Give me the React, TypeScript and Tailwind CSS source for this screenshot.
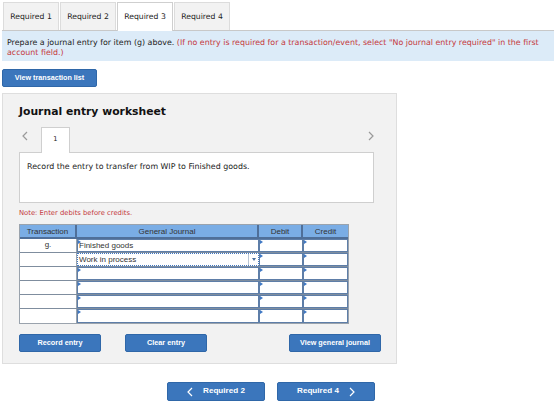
import React from "react";

const TABS = ["Required 1", "Required 2", "Required 3", "Required 4"];
const ACTIVE_TAB = 2;

const ROWS = [
  { txn: "g.", account: "Finished goods" },
  { txn: "", account: "Work in process", focused: true },
  { txn: "", account: "" },
  { txn: "", account: "" },
  { txn: "", account: "" },
  { txn: "", account: "" },
];

function Chevron({ dir, className }: { dir: "left" | "right"; className?: string }) {
  return (
    <svg width="6" height="10" viewBox="0 0 6 10" className={className}>
      <polyline
        points={dir === "left" ? "5,1 1,5 5,9" : "1,1 5,5 1,9"}
        fill="none"
        stroke="currentColor"
        strokeWidth="1.2"
      />
    </svg>
  );
}

// little blue tick that sits in the corner of every input cell
function Marker() {
  return (
    <span className="absolute left-0 top-0 h-0 w-0 border-y-[2px] border-l-[3px] border-y-transparent border-l-[#3f78c4]" />
  );
}

function InputCell({ width, children }: { width: string; children?: React.ReactNode }) {
  return (
    <div className={`${width} relative h-full border border-[#5e7ea8] bg-white`}>
      <Marker />
      {children}
    </div>
  );
}

function BlueButton({ children, className }: { children: React.ReactNode; className?: string }) {
  return (
    <button
      className={`flex items-center justify-center rounded-[2px] border border-[#2f67a8] bg-[#3b76bc] font-['Liberation_Sans',Arial,sans-serif] font-bold text-white ${className ?? ""}`}
    >
      {children}
    </button>
  );
}

export default function App() {
  return (
    <div className="h-[410px] w-[560px] bg-white pl-[2px] pt-[2px] font-['DejaVu_Sans',Verdana,sans-serif] text-[#222]">
      {/* Requirement tabs */}
      <div className="flex h-[28px] gap-[1px] pl-[1px]">
        {TABS.map((tab, i) => (
          <div
            key={tab}
            className={`flex w-[56px] items-center justify-center border border-b-0 text-[7.7px] ${
              i === ACTIVE_TAB
                ? "relative z-10 -mb-[1px] border-[#cfcfcf] bg-white"
                : "border-[#dcdcdc] bg-[#f2f2f2]"
            }`}
          >
            {tab}
          </div>
        ))}
      </div>

      {/* Instruction banner */}
      <div className="mr-[6px] h-[31px] border-t border-[#c8c8c8] bg-[#dcebf8] pl-[5px] pr-[2px] pt-[7px] text-[7.9px] leading-[10px]">
        Prepare a journal entry for item (g) above.{" "}
        <span className="text-[#c4383c]">
          (If no entry is required for a transaction/event, select "No journal entry required" in the first
          account field.)
        </span>
      </div>

      <BlueButton className="mt-[8px] h-[18px] w-[95px] text-[7.2px]">View transaction list</BlueButton>

      {/* Worksheet panel */}
      <div className="mt-[6px] h-[271px] w-[395px] border border-[#dedede] bg-[#f2f2f2] pl-[16px] pt-[12px]">
        <div className="text-[10.8px] font-bold leading-[12px] text-[#111]">Journal entry worksheet</div>

        <div className="mt-[9px] flex h-[25px] w-[355px] items-end">
          <Chevron dir="left" className="mb-[11px] ml-[3px] text-[#9a9a9a]" />
          <div className="relative z-10 -mb-[1px] ml-[13px] flex h-[26px] w-[29px] items-start justify-center border border-b-0 border-[#cfcfcf] bg-white pt-[6px] text-[6.7px]">
            1
          </div>
          <Chevron dir="right" className="mb-[11px] ml-auto text-[#9a9a9a]" />
        </div>

        <div className="h-[51px] w-[355px] border border-[#cfcfcf] bg-white pl-[7px] pt-[8px] text-[7.9px]">
          Record the entry to transfer from WIP to Finished goods.
        </div>

        <div className="mt-[6px] text-[6.8px] leading-[9px] text-[#c4383c]">Note: Enter debits before credits.</div>

        {/* Journal table */}
        <div className="mt-[6px] w-[330px] border border-[#9aa3ad] font-['Liberation_Sans',Arial,sans-serif] text-[8px] text-[#333]">
          <div className="flex h-[14px] border-b-2 border-[#4f6f99] bg-[#7aade5] leading-[13px]">
            <div className="w-[57px] border-r-2 border-[#4f6f99] text-center">Transaction</div>
            <div className="w-[182px] border-r-2 border-[#4f6f99] text-center">General Journal</div>
            <div className="w-[44px] border-r-2 border-[#4f6f99] text-center">Debit</div>
            <div className="flex-1 text-center">Credit</div>
          </div>
          {ROWS.map((row, i) => (
            <div key={i} className="flex h-[14px] border-b border-[#7f8d9e] leading-[12px] last:border-b-0">
              <div className="w-[57px] border-r border-[#9aa3ad] bg-white text-center">{row.txn}</div>
              {row.focused ? (
                <div className="relative flex h-full w-[182px] border border-dotted border-[#3f78c4] bg-white">
                  <span className="flex-1 pl-[1px]">{row.account}</span>
                  <span className="flex w-[10px] items-center justify-center border-l border-[#b7c4d4]">
                    <span className="h-0 w-0 border-x-[2.5px] border-t-[3px] border-x-transparent border-t-[#4a6f9f]" />
                  </span>
                </div>
              ) : (
                <InputCell width="w-[182px]">
                  <span className="pl-[1px]">{row.account}</span>
                </InputCell>
              )}
              <InputCell width="w-[44px]" />
              <InputCell width="flex-1" />
            </div>
          ))}
        </div>

        <div className="mt-[10px] flex h-[18px] w-[362px]">
          <BlueButton className="h-full w-[82px] text-[7.3px]">Record entry</BlueButton>
          <BlueButton className="ml-[24px] h-full w-[82px] text-[7.3px]">Clear entry</BlueButton>
          <BlueButton className="ml-auto h-full w-[92px] text-[7.2px]">View general journal</BlueButton>
        </div>
      </div>

      {/* Requirement navigation */}
      <div className="mt-[18px] flex gap-[12px] pl-[165px]">
        <BlueButton className="h-[19px] w-[98px] gap-[10px] text-[8.1px]">
          <Chevron dir="left" />
          Required 2
        </BlueButton>
        <BlueButton className="h-[19px] w-[98px] gap-[10px] text-[8.1px]">
          Required 4
          <Chevron dir="right" />
        </BlueButton>
      </div>
    </div>
  );
}
